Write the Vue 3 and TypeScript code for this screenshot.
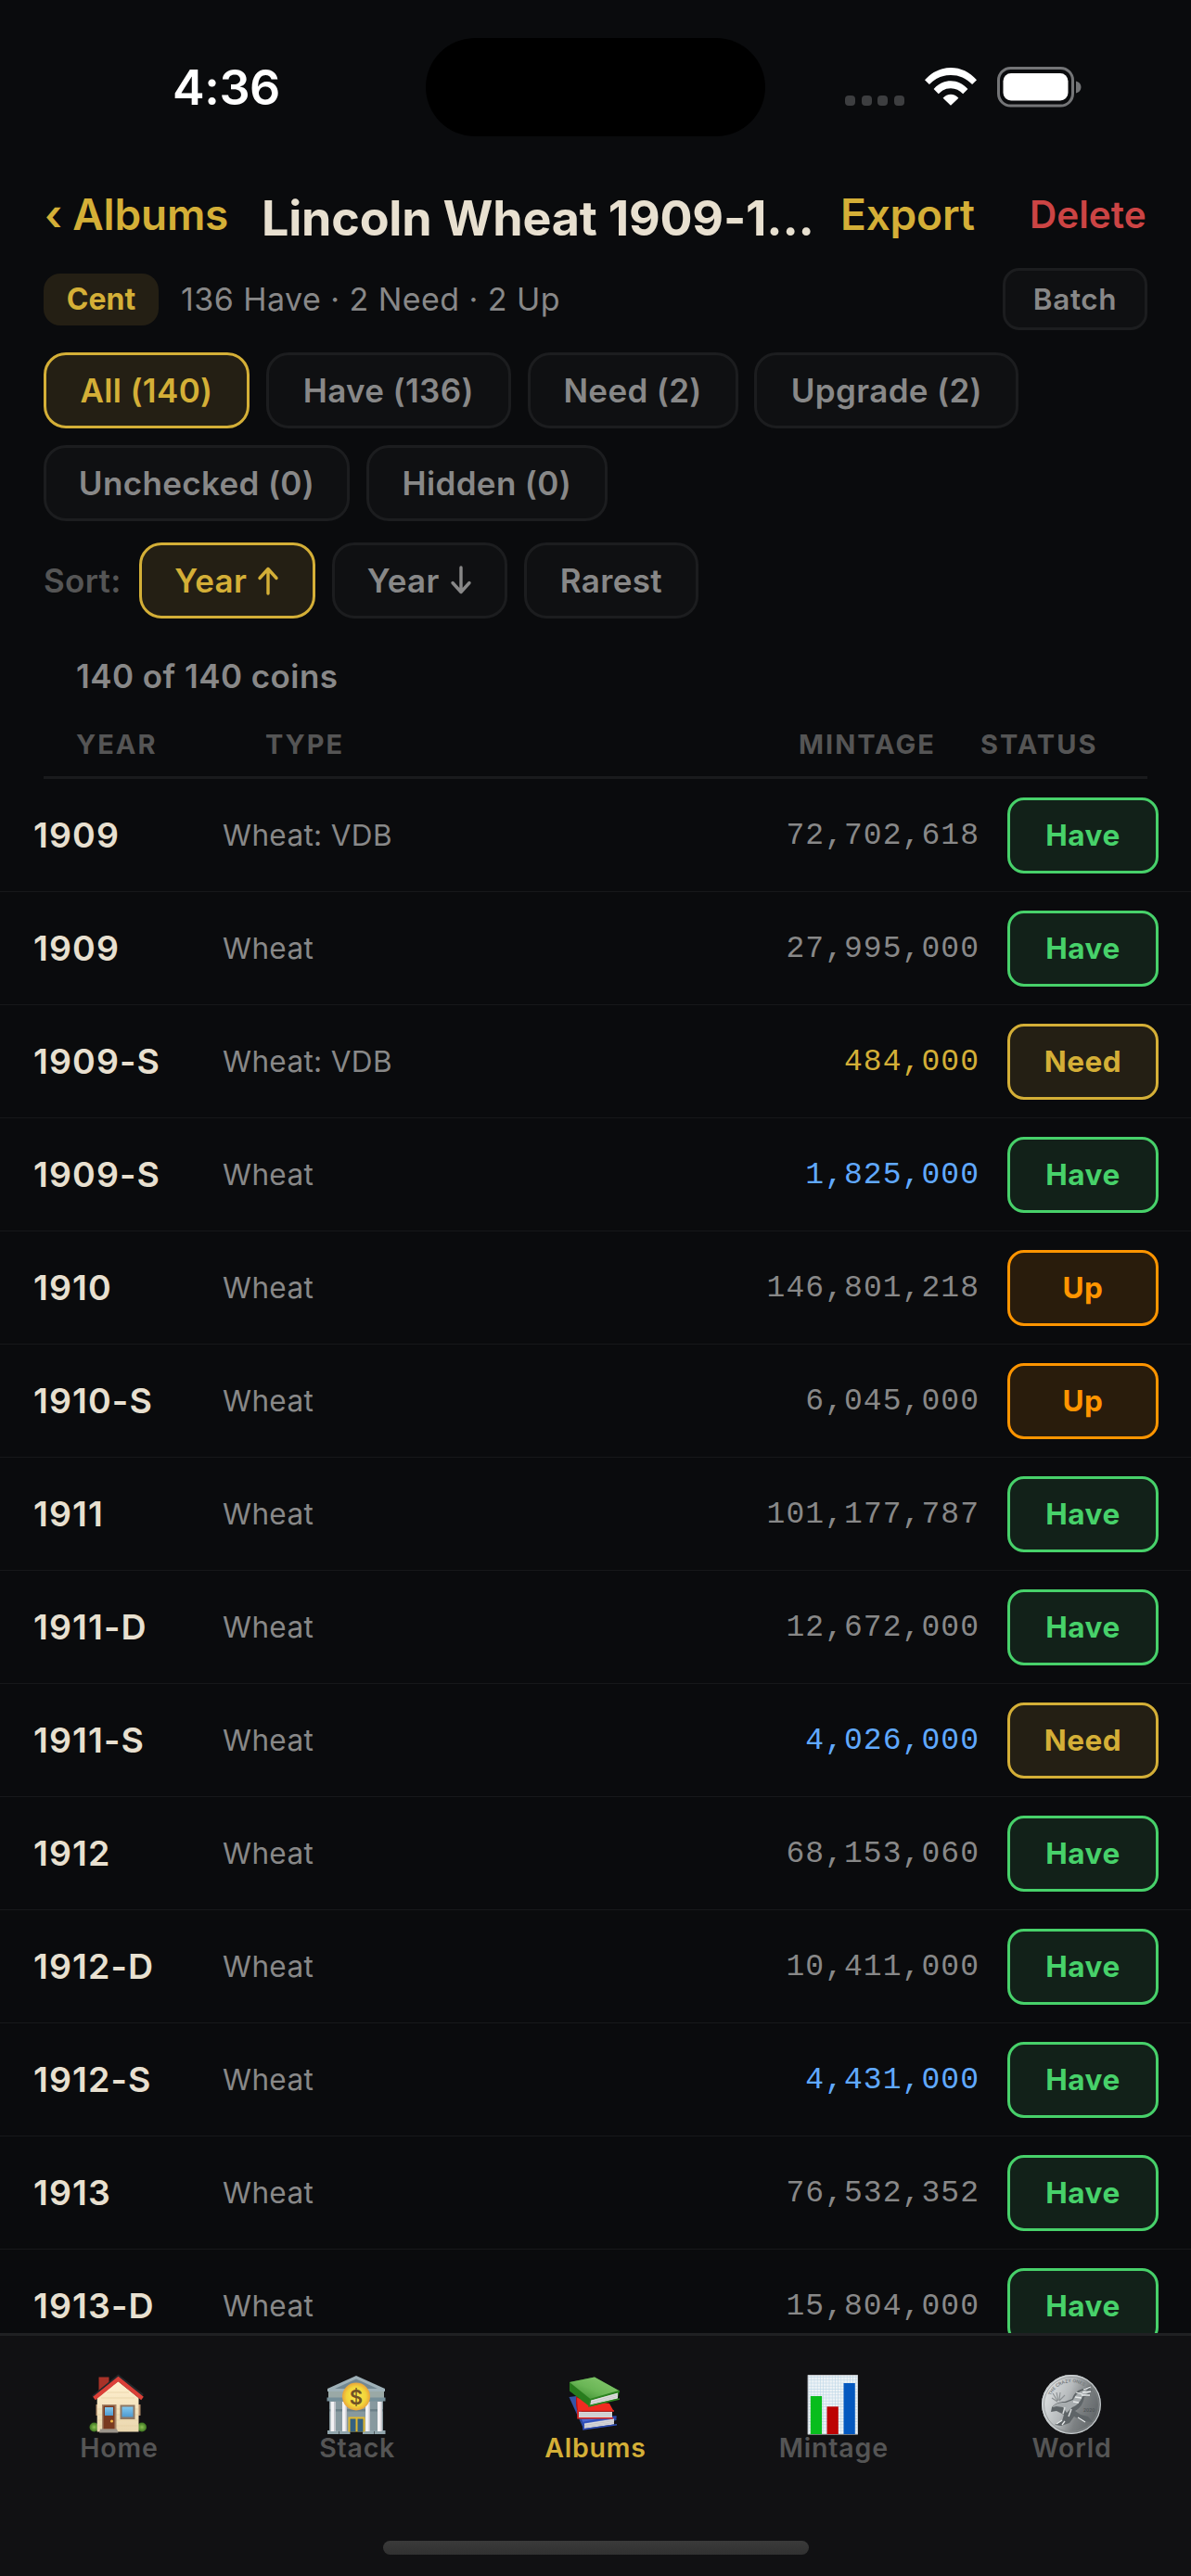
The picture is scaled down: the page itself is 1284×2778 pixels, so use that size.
<script setup lang="ts">
type Status = 'Have' | 'Need' | 'Up'
type Rarity = 'common' | 'scarce' | 'key'

interface Chip {
  label: string
  width: number
  active?: boolean
  arrow?: 'up' | 'down'
}

interface Coin {
  year: string
  type: string
  mintage: string
  status: Status
  rarity: Rarity
}

const filters: Chip[] = [
  { label: 'All (140)', width: 222, active: true },
  { label: 'Have (136)', width: 264 },
  { label: 'Need (2)', width: 227 },
  { label: 'Upgrade (2)', width: 285 },
  { label: 'Unchecked (0)', width: 330 },
  { label: 'Hidden (0)', width: 260 },
]

const sorts: Chip[] = [
  { label: 'Year', width: 190, active: true, arrow: 'up' },
  { label: 'Year', width: 189.5, arrow: 'down' },
  { label: 'Rarest', width: 188 },
]

const coin = (year: string, type: string, mintage: string, status: Status = 'Have', rarity: Rarity = 'common'): Coin => ({
  year,
  type,
  mintage,
  status,
  rarity,
})

const coins: Coin[] = [
  coin('1909', 'Wheat: VDB', '72,702,618'),
  coin('1909', 'Wheat', '27,995,000'),
  coin('1909-S', 'Wheat: VDB', '484,000', 'Need', 'key'),
  coin('1909-S', 'Wheat', '1,825,000', 'Have', 'scarce'),
  coin('1910', 'Wheat', '146,801,218', 'Up'),
  coin('1910-S', 'Wheat', '6,045,000', 'Up'),
  coin('1911', 'Wheat', '101,177,787'),
  coin('1911-D', 'Wheat', '12,672,000'),
  coin('1911-S', 'Wheat', '4,026,000', 'Need', 'scarce'),
  coin('1912', 'Wheat', '68,153,060'),
  coin('1912-D', 'Wheat', '10,411,000'),
  coin('1912-S', 'Wheat', '4,431,000', 'Have', 'scarce'),
  coin('1913', 'Wheat', '76,532,352'),
  coin('1913-D', 'Wheat', '15,804,000'),
]

const tabs = ['Home', 'Stack', 'Albums', 'Mintage', 'World']
</script>

<template>
  <div class="screen">
    <div class="statusbar">
      <div class="time">4:36</div>
      <div class="island"></div>
      <div class="indicators">
        <div class="dots"><i></i><i></i><i></i><i></i></div>
        <svg class="wifi" width="58" height="42" viewBox="0 0 58 42">
          <path d="M1 14.2C8.700 5.600 18.300 1 29 1s20.300 4.600 28 13.200l-4.900 4.900C45.700 12.200 38 8.900 29 8.900S12.300 12.200 5.900 19.100z" fill="#fff" />
          <path d="M10.600 24C15.800 18.300 22 15.300 29 15.300s13.200 3 18.400 8.700l-5.200 5.200C38.500 25.200 34.200 23.200 29 23.200s-9.500 2-13.200 6z" fill="#fff" />
          <path d="M20.600 33.700C23 31 25.800 29.700 29 29.700s6 1.300 8.400 4L29 41.800z" fill="#fff" />
        </svg>
        <svg class="battery" width="92" height="44" viewBox="0 0 92 44">
          <rect x="1.500" y="1.500" width="80" height="40.500" rx="13" fill="none" stroke="#747577" stroke-width="3" />
          <rect x="6.500" y="7" width="70" height="29.500" rx="8.500" fill="#fff" />
          <path d="M85 15.500c3.400.8 5.500 3.200 5.500 6.500s-2.100 5.700-5.500 6.500z" fill="#747577" />
        </svg>
      </div>
    </div>

    <header class="header">
      <div class="back">‹ Albums</div>
      <h1>Lincoln Wheat 1909-1...</h1>
      <div class="export">Export</div>
      <div class="delete">Delete</div>
    </header>

    <div class="meta">
      <span class="denom">Cent</span>
      <span class="stats">136 Have · 2 Need · 2 Up</span>
      <button class="batch">Batch</button>
    </div>

    <div class="chips">
      <button v-for="f in filters" :key="f.label" class="chip" :class="{ active: f.active }" :style="{ width: f.width + 'px' }">{{ f.label }}</button>
    </div>

    <div class="sorts">
      <span class="sortlabel">Sort:</span>
      <button v-for="(s, i) in sorts" :key="i" class="chip" :class="{ active: s.active }" :style="{ width: s.width + 'px' }">
        <span>{{ s.label }}</span>
        <svg v-if="s.arrow" class="arrow" :class="{ flipped: s.arrow === 'down' }" width="24" height="32" viewBox="0 0 24 32" fill="none" stroke="currentColor" stroke-width="3.400" stroke-linecap="round" stroke-linejoin="round">
          <path d="M12 30V3.500M3 13.500L12 3.500l9 10" />
        </svg>
      </button>
    </div>

    <div class="count">140 of 140 coins</div>

    <div class="thead">
      <span class="h-year">YEAR</span>
      <span class="h-type">TYPE</span>
      <span class="h-mint">MINTAGE</span>
      <span class="h-status">STATUS</span>
    </div>

    <main class="list">
      <div v-for="(c, i) in coins" :key="i" class="row">
        <span class="year">{{ c.year }}</span>
        <span class="type">{{ c.type }}</span>
        <span class="mintage" :class="c.rarity">{{ c.mintage }}</span>
        <button class="status" :class="c.status.toLowerCase()">{{ c.status }}</button>
      </div>
    </main>

    <nav class="tabbar">
      <div v-for="t in tabs" :key="t" class="tab" :class="{ current: t === 'Albums' }">
        <svg v-if="t === 'Home'" width="66" height="66" viewBox="0 0 66 66">
          <defs>
            <linearGradient id="wall" x1="0" y1="0" x2="0" y2="1"><stop offset="0" stop-color="#fff0cf" /><stop offset="1" stop-color="#ead7ae" /></linearGradient>
            <linearGradient id="pane" x1="0" y1="0" x2="0" y2="1"><stop offset="0" stop-color="#83c8ee" /><stop offset="1" stop-color="#4f9ad0" /></linearGradient>
            <radialGradient id="bush"><stop offset="0" stop-color="#8cc152" /><stop offset="1" stop-color="#3c7420" /></radialGradient>
          </defs>
          <circle cx="6.500" cy="57.500" r="5" fill="url(#bush)" />
          <circle cx="58" cy="57.500" r="5" fill="url(#bush)" />
          <path d="M11.500 3.500h11v9l-11 8z" fill="#a83228" />
          <path d="M8.500 33h48v12h-48z" fill="#b08a68" />
          <path d="M9.700 26L32.200 8l22.300 18v36.500H9.700z" fill="url(#wall)" />
          <path d="M10 38h44M10 44h44M10 50h44M10 56h44M14 26h36M20 20h24" stroke="#e4cfa4" stroke-width=".7" />
          <path d="M5 24.500L32.500 2 59 23" fill="none" stroke="#24282b" stroke-width="2.500" />
          <path d="M6.500 26.500L32.500 5.500 58.500 26.500" fill="none" stroke="#db4038" stroke-width="4.200" />
          <rect x="15" y="33" width="15.500" height="28" fill="#a58367" />
          <rect x="16.500" y="34.500" width="12" height="25" fill="#79391f" />
          <rect x="18" y="36" width="9" height="9" fill="url(#pane)" />
          <circle cx="25.500" cy="51" r="1.600" fill="#f1b646" />
          <rect x="34.500" y="33.500" width="16" height="15.500" fill="#8e7763" />
          <rect x="36.500" y="35.500" width="12" height="11" fill="url(#pane)" />
          <path d="M13 59.500h18l1.500 4H12z" fill="#9b948b" />
        </svg>

        <svg v-else-if="t === 'Stack'" width="66" height="66" viewBox="1 0 66 66">
          <defs>
            <radialGradient id="gold"><stop offset="0" stop-color="#fae84b" /><stop offset=".7" stop-color="#f2d43a" /><stop offset="1" stop-color="#e9a53b" /></radialGradient>
          </defs>
          <path d="M4 28h58v34H4z" fill="#87999f" />
          <path d="M4 38h58v2.500H4z" fill="#6d8189" />
          <path d="M3 17h60v9H3z" fill="#9aa9a6" />
          <path d="M2 16L33 2l31 14v3H2z" fill="#9fb1b8" />
          <path d="M10 16L33 5.500 56 16z" fill="#738892" />
          <path d="M1.500 25.500h63v4h-63z" fill="#76909a" />
          <path d="M2 61h12v4H2zM14.500 61h12v4h-12zM40 61h12v4H40zM52.500 61h12v4h-12z" fill="#91a5ac" />
          <path d="M5.500 30h5v32h-5zM18 30h5v32h-5zM43 30h5v32h-5zM56 30h5v32h-5z" fill="#f3f2f4" />
          <path d="M9 30h1.500v32H9zM21.500 30H23v32h-1.500zM46.500 30H48v32h-1.500zM59.500 30H61v32h-1.500z" fill="#c5c5cb" />
          <path d="M24.500 46.500h18v16h-18z" fill="#e2b92f" />
          <path d="M26.500 48.500h6v14h-6zM34.500 48.500h6v14h-6z" fill="#356181" />
          <circle cx="33" cy="24.500" r="15" fill="url(#gold)" />
          <text x="33" y="32.500" text-anchor="middle" letter-spacing="0" font-family="Inter, sans-serif" font-size="22" font-weight="600" fill="#715226">$</text>
        </svg>

        <svg v-else-if="t === 'Albums'" width="66" height="66" viewBox="0 0 66 66">
          <defs>
            <linearGradient id="green" x1="0" y1="1" x2="1" y2="0"><stop offset="0" stop-color="#35852a" /><stop offset=".45" stop-color="#6ab656" /><stop offset="1" stop-color="#8bca72" /></linearGradient>
          </defs>
          <path d="M4.500 25l8-1 9 28-1 8z" fill="#3553a8" />
          <path d="M12 40l43.500 6v4l-35 9z" fill="#29459a" />
          <path d="M18 49l33-1 4 0-35 6z" fill="#4a68d0" />
          <path d="M21 53.500l32-5v6l-32 4.500z" fill="#d9d9dc" />
          <path d="M21 55.500l32-5M21 57l32-4.500" stroke="#b7b8bd" stroke-width=".6" />
          <path d="M55.500 46L20 52.500v7.300l36-5" fill="none" stroke="#2e4eb8" stroke-width="1.500" />
          <path d="M12 24l6 4-3 12v8l-3-14z" fill="#b91417" />
          <path d="M13 26l35 6 4.500 8H14z" fill="#f12b20" />
          <path d="M15 41h36v6.500H15z" fill="#d9d9dc" />
          <path d="M15 43h36M15 45.300h36" stroke="#b7b8bd" stroke-width=".6" />
          <path d="M53 40H14v7.800h38" fill="none" stroke="#df261f" stroke-width="1.600" />
          <path d="M5 9L32 3.500l27 15-2.500 9L27 35.500 5 18.500z" fill="#287c1d" />
          <path d="M5 9L32 3.500l27 15L28 27.500z" fill="url(#green)" />
          <path d="M28 28.500l29-8v6L27 33.500z" fill="#e0e0e1" />
          <path d="M28 30.500l29-8M27.500 32.300l29-7.800" stroke="#b9bbb9" stroke-width=".6" />
          <path d="M59 18.500L27.500 27.500 26 34.800l33-7.800" fill="none" stroke="#2d8422" stroke-width="1.500" />
        </svg>

        <svg v-else-if="t === 'Mintage'" width="66" height="66" viewBox="1.200 0 66 66">
          <defs>
            <pattern id="grid" width="3.200" height="3.200" patternUnits="userSpaceOnUse"><rect width="3.200" height="3.200" fill="#eef3f6" /><path d="M0 0h3.200M0 0v3.200" stroke="#bdd6e6" stroke-width="1.100" /></pattern>
          </defs>
          <rect x="6" y="1.300" width="54" height="64" fill="url(#grid)" />
          <rect x="6.400" y="1.700" width="53.200" height="63.200" fill="none" stroke="#c9ccd0" stroke-width=".8" />
          <rect x="9" y="24" width="12.300" height="41" fill="#08bd1d" />
          <rect x="26.700" y="35.300" width="12.300" height="29.700" fill="#bd0303" />
          <rect x="44.700" y="10" width="12.300" height="55" fill="#0458bf" />
        </svg>

        <svg v-else width="66" height="66" viewBox="1 0 66 66">
          <defs>
            <linearGradient id="silver" x1="0" y1=".3" x2="1" y2=".7"><stop offset="0" stop-color="#e2e5e6" /><stop offset=".4" stop-color="#b6babc" /><stop offset=".65" stop-color="#7d8183" /><stop offset="1" stop-color="#5c6164" /></linearGradient>
            <path id="rim" d="M11 23.500A24 24 0 0 1 57 33" />
          </defs>
          <circle cx="33" cy="33" r="32" fill="url(#silver)" />
          <circle cx="33" cy="33" r="31.300" fill="none" stroke="#c8cdcf" stroke-width="1.200" />
          <circle cx="33" cy="33" r="29.500" fill="none" stroke="#85898b" stroke-width=".7" />
          <text class="inscription" fill="#74797b"><textPath href="#rim">THE CRAZY ONES</textPath></text>
          <text x="46" y="40.500" class="inscription" fill="#4f5456">2020</text>
          <path d="M12 36c3-4 8-6 14-6l8-3c2-7 7-10 12-11l9-4-3 5 4 0-5 4 3 1-7 3c-1 6-4 12-10 15l6 4 8 2 5 6-11-1-9-5-5 7-9 3-7-1 8-4 2-7-8-4-6 1z" fill="#5e6467" />
          <path d="M13 35c4-4 9-4 14-4l8-3c2-5 6-9 11-10l7-4-6 6 6 0-8 4c-2 6-6 10-11 12l-6 6-4-6-7-1-4 1z" fill="#a8adaf" />
          <path d="M38 20l7 2M37 25l7 1M35 30l6 1M46 17l8-3M45 20l9-1M44 23l9 0M23 50l-6 4M26 51l-3 4M40 47l8 5" stroke="#e6e9ea" stroke-width="1.300" />
          <path d="M18 29l-5-8M19 29l-2-9M20 28l1-8M20 29l6-6M18 30l-6-4" stroke="#8b9092" stroke-width="1.100" />
          <path d="M26 36l-2 7M33 38l-3 8" stroke="#d9dddd" stroke-width="1.500" />
        </svg>
        <span>{{ t }}</span>
      </div>
      <div class="homebar"></div>
    </nav>
  </div>
</template>

<style>
body {
  background: #0a0b0d;
}
</style>

<style scoped>
.screen {
  width: 1284px;
  height: 2778px;
  box-sizing: border-box;
  display: flex;
  flex-direction: column;
  overflow: hidden;
  background: #0a0b0d;
  color: #888;
  font-family: Inter, sans-serif;
}
.screen * {
  box-sizing: border-box;
}
button {
  font: inherit;
  margin: 0;
  padding: 0;
}
.statusbar {
  flex: none;
  height: 201px;
  padding-top: 41px;
  display: flex;
  align-items: flex-start;
}
.time {
  width: 459px;
  padding-left: 186px;
  color: #fff;
  font-size: 52px;
  font-weight: 600;
  line-height: 107px;
  letter-spacing: -0.400px;
}
.island {
  width: 366px;
  height: 106px;
  border-radius: 53px;
  background: #000;
}
.indicators {
  display: flex;
  padding: 31px 0 0 86px;
}
.dots {
  display: flex;
  gap: 6.500px;
  padding-top: 31px;
  width: 85px;
}
.dots i {
  width: 11px;
  height: 11px;
  border-radius: 4px;
  background: #3d3e40;
}
.battery {
  margin-left: 21px;
}
.header {
  flex: none;
  height: 64px;
  display: flex;
  padding: 0 47px;
  white-space: nowrap;
  line-height: 61px;
}
.back {
  width: 235px;
  padding-left: 1px;
  color: #d4af37;
  font-size: 46px;
  font-weight: 600;
  letter-spacing: -0.200px;
}
.header h1 {
  margin: 0;
  width: 624px;
  color: #e8e0d0;
  font-size: 52px;
  font-weight: 700;
  line-height: 69px;
  letter-spacing: -0.200px;
}
.export {
  width: 204px;
  color: #d4af37;
  font-size: 46px;
  font-weight: 600;
  letter-spacing: -0.200px;
}
.delete {
  color: #cc4444;
  font-size: 40.500px;
  font-weight: 600;
}
.meta {
  flex: none;
  height: 67px;
  margin-top: 24px;
  padding: 0 47px;
  display: flex;
  align-items: center;
}
.denom {
  width: 124px;
  height: 56px;
  border-radius: 18px;
  background: #241f14;
  color: #d4af37;
  text-align: center;
  font-size: 32px;
  font-weight: 700;
  line-height: 56px;
}
.stats {
  padding-left: 24px;
  font-size: 34px;
  letter-spacing: 0.450px;
}
.batch {
  width: 156px;
  height: 67px;
  margin-left: auto;
  border: 3px solid #1c1d1f;
  border-radius: 18px;
  background: #0f1012;
  color: #888;
  font-size: 31.500px;
  font-weight: 600;
  letter-spacing: 0.600px;
}
.chips,
.sorts {
  flex: none;
  display: flex;
  flex-wrap: wrap;
  gap: 18px 17.800px;
  padding: 0 47px;
  margin-top: 24px;
}
.sorts {
  margin-top: 23px;
}
.chip {
  height: 82px;
  border: 3px solid #1c1d1f;
  border-radius: 24px;
  background: #0f1012;
  color: #888;
  font-size: 35px;
  font-weight: 600;
  letter-spacing: 0.350px;
  display: flex;
  align-items: center;
  justify-content: center;
  gap: 11px;
  white-space: nowrap;
}
.chip.active {
  border-color: #d4af37;
  background: #241f14;
  color: #d4af37;
}
.arrow.flipped {
  transform: rotate(180deg);
}
.sortlabel {
  width: 85px;
  color: #555;
  font-size: 35px;
  font-weight: 600;
  line-height: 82px;
  letter-spacing: 0.300px;
}
.count {
  flex: none;
  margin-top: 32px;
  padding-left: 82px;
  height: 61px;
  font-size: 35px;
  font-weight: 600;
  line-height: 60px;
  letter-spacing: 0.450px;
}
.thead {
  flex: none;
  height: 80px;
  margin: 0 47px;
  padding: 14px 35px 0;
  border-bottom: 3px solid #1a1b1d;
  display: flex;
  color: #555;
  font-size: 29px;
  font-weight: 700;
  line-height: 58px;
  letter-spacing: 2px;
}
.h-year {
  width: 204px;
}
.h-type {
  width: 575px;
}
.h-mint {
  width: 196px;
}
.list {
  flex: 1;
  min-height: 0;
  overflow: hidden;
}
.row {
  height: 122px;
  border-bottom: 1px solid #17181a;
  display: flex;
  align-items: center;
  padding: 0 35px;
}
.year {
  width: 205px;
  padding-left: 1px;
  color: #e8e0d0;
  font-size: 37.500px;
  font-weight: 600;
  line-height: 44px;
  letter-spacing: 1.100px;
  font-kerning: none;
}
.type {
  width: 300px;
  font-size: 31.500px;
  line-height: 38px;
  letter-spacing: 0.350px;
}
.mintage {
  flex: 1;
  margin-right: 30px;
  text-align: right;
  font-family: 'Liberation Mono', monospace;
  font-size: 33px;
  letter-spacing: 1.050px;
  line-height: 40px;
  padding-top: 2px;
}
.mintage.key {
  color: #d4af37;
}
.mintage.scarce {
  color: #60a9ff;
}
.status {
  width: 163px;
  height: 82px;
  border: 3px solid;
  border-radius: 18px;
  font-size: 31.500px;
  font-weight: 700;
  letter-spacing: 0.500px;
}
.have {
  color: #47d16a;
  background: #122119;
}
.need {
  color: #d4af37;
  background: #241f14;
}
.up {
  color: #ff9500;
  background: #291c0c;
}
.tabbar {
  flex: none;
  position: relative;
  height: 262px;
  border-top: 3px solid #202123;
  background: #111113;
  display: flex;
  padding-top: 41px;
}
.tab {
  flex: 1;
  display: flex;
  flex-direction: column;
  align-items: center;
  color: #555;
  font-size: 28.500px;
  font-weight: 600;
  letter-spacing: 0.800px;
  line-height: 32px;
}
.tab.current {
  color: #d4af37;
}
.tab svg {
  flex: none;
  margin-bottom: -2px;
}
.inscription {
  font-size: 4.800px;
  letter-spacing: 0;
}
.homebar {
  position: absolute;
  left: 413px;
  top: 221px;
  width: 459px;
  height: 15px;
  border-radius: 8px;
  background: linear-gradient(#3a3a3a, #313131);
}
</style>
